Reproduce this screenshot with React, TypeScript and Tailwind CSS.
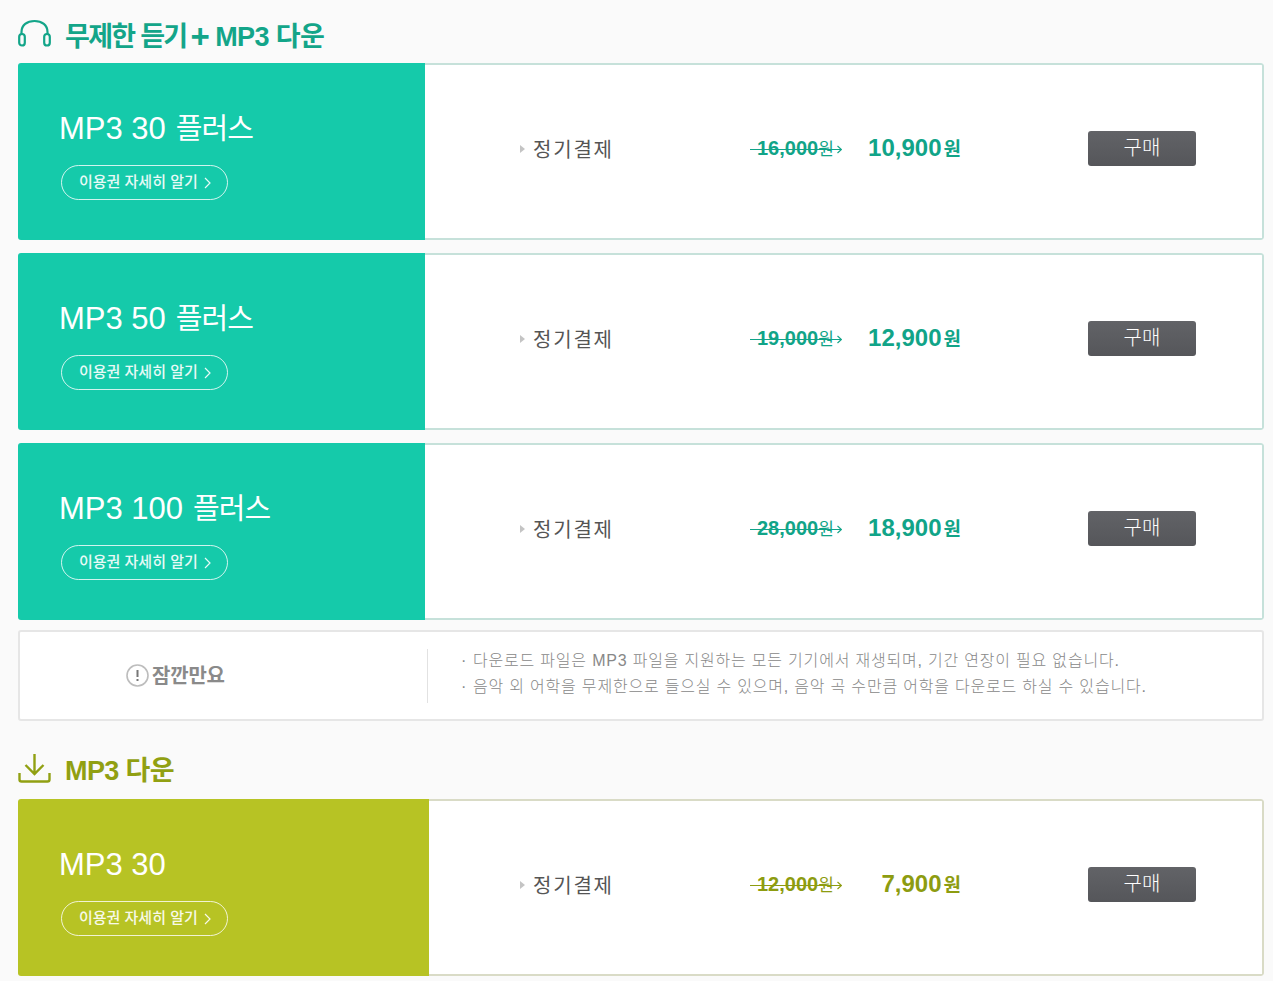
import React from 'react';

const font = "font-['Liberation_Sans','Noto_Sans_CJK_KR',sans-serif]";

type Plan = {
  name: string;
  suffix?: string;
  oldPrice: string;
  price: string;
};

const teal: Plan[] = [
  { name: 'MP3 30', suffix: '플러스', oldPrice: '16,000', price: '10,900' },
  { name: 'MP3 50', suffix: '플러스', oldPrice: '19,000', price: '12,900' },
  { name: 'MP3 100', suffix: '플러스', oldPrice: '28,000', price: '18,900' },
];

const PlanCard = ({ plan, green }: { plan: Plan; green?: boolean }) => {
  const priceColor = green ? 'text-[#8d9c10]' : 'text-[#11a488]';
  return (
    <div className="flex h-[177px] overflow-hidden rounded-[3px]">
      <div className={green ? 'w-[411px] shrink-0 bg-[#b7c324] pl-[41px] pt-[45px]' : 'w-[407px] shrink-0 bg-[#15caaa] pl-[41px] pt-[45px]'}>
        <div className="text-[31px] leading-[42px] text-white">
          {plan.name}
          {plan.suffix && <span className="ml-[10px] text-[29px] tracking-[-1px]">{plan.suffix}</span>}
        </div>
        <div className="ml-[2px] mt-[15px] flex h-[35px] w-[167px] items-center rounded-full border border-white/80 pl-[17px] text-[15px] font-medium text-white/90">
          <span>이용권 자세히 알기</span>
          <svg className="ml-[6px]" width="7" height="12" viewBox="0 0 7 12" fill="none">
            <path d="M1 1l5 5-5 5" stroke="#ffffff" strokeOpacity="0.9" strokeWidth="1.2" />
          </svg>
        </div>
      </div>
      <div className={green ? 'flex flex-1 items-center rounded-r-[3px] border-2 border-l-0 border-[#d9dbc6] bg-white pb-[6px] pl-[91px] pr-[66px]' : 'flex flex-1 items-center rounded-r-[3px] border-2 border-l-0 border-[#c6e1da] bg-white pb-[6px] pl-[95px] pr-[66px]'}>
        <span className="h-0 w-0 border-y-[4px] border-l-[5px] border-y-transparent border-l-[#c4c4c4]" />
        <span className="ml-[8px] pt-[3px] text-[20px] tracking-[1.8px] text-[#555]">정기결제</span>
        <div className={`relative ml-auto flex h-[26px] w-[92px] items-baseline pl-[7px] ${priceColor}`}>
          <span className="text-[20px] font-bold leading-[25px]">{plan.oldPrice}</span>
          <span className="text-[17px] leading-[25px]">원</span>
          <svg className="absolute left-0 top-[9px]" width="92" height="9" viewBox="0 0 92 9" fill="none">
            <path d="M0 4.5h91M87.5 1l4 3.5-4 3.5" stroke="currentColor" strokeWidth="1.2" />
          </svg>
        </div>
        <div className={`ml-[26px] flex w-[93px] items-baseline justify-end text-[24px] font-bold leading-[30px] ${priceColor}`}>
          <span>{plan.price}</span>
          <span className="ml-[2px] text-[19px]">원</span>
        </div>
        <button className="ml-[127px] flex h-[35px] w-[108px] items-center justify-center rounded-[3px] bg-gradient-to-b from-[#626367] to-[#55565a] pb-[1px] text-[20px] font-light text-white">
          구매
        </button>
      </div>
    </div>
  );
};

const App = () => {
  return (
    <div className={`min-h-screen bg-[#fafafa] pl-[18px] pr-[9px] ${font}`}>
      <div className="flex h-[63px] items-center pt-[3px]">
        <svg width="33" height="28" viewBox="0 0 33 28" fill="none" stroke="#13a589" strokeWidth="2.2">
          <path d="M3.5 16V13C3.5 6 9 2 16.5 2S29.5 6 29.5 13v3" />
          <rect x="1.2" y="15" width="5.6" height="11.5" rx="2.8" />
          <rect x="26.2" y="15" width="5.6" height="11.5" rx="2.8" />
        </svg>
        <h2 className="ml-[14px] flex items-center pt-[7px] text-[27px] font-bold leading-[36px] tracking-[-0.6px] text-[#13a589]">
          <span className="tracking-[-1.7px]">무제한 듣기</span>
          <span className="ml-[4px] mr-[6px] text-[33px] leading-[36px]">+</span>
          <span>MP3 다운</span>
        </h2>
      </div>
      <div className="flex flex-col gap-[13px]">
        {teal.map((plan) => (
          <PlanCard key={plan.name} plan={plan} />
        ))}
      </div>
      <div className="mt-[10px] flex h-[91px] items-center rounded-[3px] border-2 border-[#e6e6e6] bg-white">
        <div className="flex w-[407px] items-center pl-[106px]">
          <svg width="23" height="23" viewBox="0 0 23 23" fill="none">
            <circle cx="11.5" cy="11.5" r="10.5" stroke="#bdbdbd" strokeWidth="1.6" />
            <path d="M11.5 6v7M11.5 15v2" stroke="#777" strokeWidth="2" />
          </svg>
          <span className="ml-[3px] text-[20px] font-bold tracking-[-0.2px] text-[#8a8a8a]">잠깐만요</span>
        </div>
        <div className="h-[54px] w-px bg-[#e2e2e2]" />
        <ul className="ml-[33px] pb-[4px] text-[16px] font-light leading-[26px] tracking-[0.8px] text-[#888]">
          <li className="flex">
            <span className="w-[12px]">·</span>
            <span>다운로드 파일은 MP3 파일을 지원하는 모든 기기에서 재생되며, 기간 연장이 필요 없습니다.</span>
          </li>
          <li className="flex">
            <span className="w-[12px]">·</span>
            <span>음악 외 어학을 무제한으로 들으실 수 있으며, 음악 곡 수만큼 어학을 다운로드 하실 수 있습니다.</span>
          </li>
        </ul>
      </div>
      <div className="flex h-[78px] items-center pt-[16px]">
        <svg width="33" height="30" viewBox="0 0 33 30" fill="none" stroke="#91a012" strokeWidth="2.4">
          <path d="M16.5 1v20M7.5 12l9 9 9-9" />
          <path d="M1.5 20v6.5a2 2 0 0 0 2 2h26a2 2 0 0 0 2-2V20" />
        </svg>
        <h2 className="ml-[14px] pt-[6px] text-[27px] font-bold leading-[36px] tracking-[-0.6px] text-[#91a012]">MP3 다운</h2>
      </div>
      <PlanCard green plan={{ name: 'MP3 30', oldPrice: '12,000', price: '7,900' }} />
    </div>
  );
};

export default App;
